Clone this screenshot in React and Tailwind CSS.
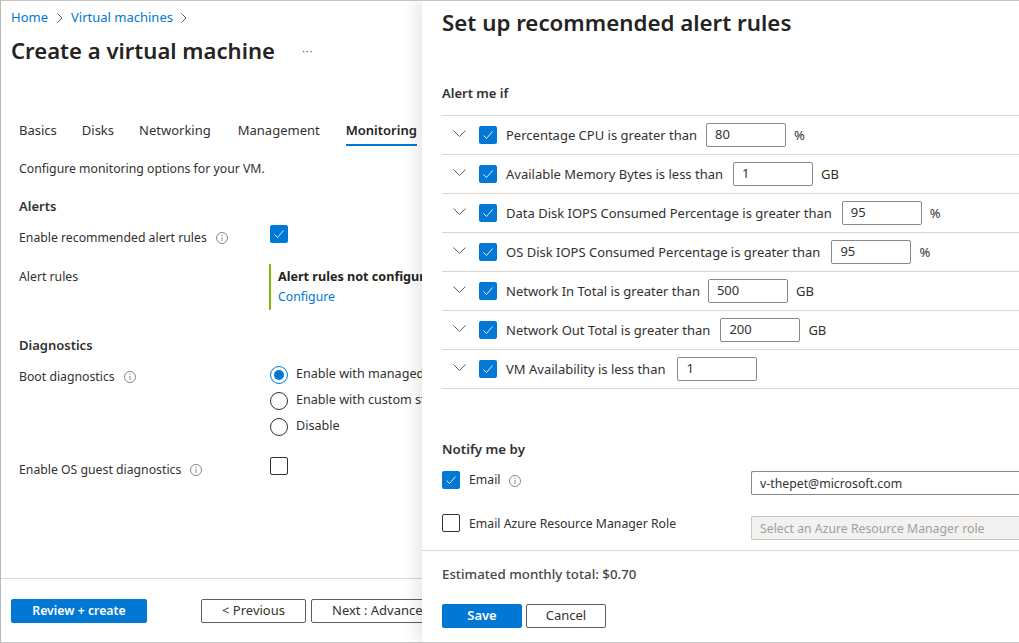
function Check({ on, className = "" }) {
  return (
    <span className={`flex h-[18px] w-[18px] shrink-0 items-center justify-center rounded-[2px] ${on ? "bg-[#0078d4]" : "border border-[#323130] bg-white"} ${className}`}>
      {on && (
        <svg width="12" height="12" viewBox="0 0 12 12" fill="none">
          <path d="M1.5 6.5 L4.5 9.5 L10.5 2.5" stroke="white" strokeWidth="0.9" />
        </svg>
      )}
    </span>
  );
}

function Info({ className = "" }) {
  return (
    <svg width="12" height="12" viewBox="0 0 12 12" fill="none" className={`shrink-0 ${className}`}>
      <circle cx="6" cy="6" r="5.5" stroke="#8a8886" />
      <path d="M6 5v4" stroke="#8a8886" />
      <circle cx="6" cy="3.3" r="0.7" fill="#8a8886" />
    </svg>
  );
}

function Chevron() {
  return (
    <svg width="13" height="7" viewBox="0 0 13 7" fill="none" className="shrink-0 -translate-y-[1px]">
      <path d="M0.5 0.5 L6.5 6.5 L12.5 0.5" stroke="#605e5c" />
    </svg>
  );
}

function Crumb() {
  return (
    <svg width="6" height="10" viewBox="0 0 6 10" fill="none" className="shrink-0">
      <path d="M0.5 0.5 L5 5 L0.5 9.5" stroke="#605e5c" />
    </svg>
  );
}

function Radio({ on, label }) {
  return (
    <div className="flex h-[18px] items-center gap-2">
      <span className={`flex h-[18px] w-[18px] shrink-0 items-center justify-center rounded-full border ${on ? "border-[#0078d4]" : "border-[#323130]"}`}>
        {on && <span className="h-[10px] w-[10px] rounded-full bg-[#0078d4]" />}
      </span>
      <span className="whitespace-nowrap text-[12.6px]">{label}</span>
    </div>
  );
}

const rules = [
  ["Percentage CPU is greater than", "80", "%", "ml-[9px]"],
  ["Available Memory Bytes is less than", "1", "GB", "ml-[10px]"],
  ["Data Disk IOPS Consumed Percentage is greater than", "95", "%", "ml-[10px]"],
  ["OS Disk IOPS Consumed Percentage is greater than", "95", "%", "ml-[11px]"],
  ["Network In Total is greater than", "500", "GB", "ml-[8px]"],
  ["Network Out Total is greater than", "200", "GB", "ml-[10px]"],
  ["VM Availability is less than", "1", "", "ml-[12px]"],
];

function Rule({ label, value, unit, gap }) {
  return (
    <div className="flex h-[39px] items-center border-t border-[#d6d6d6] pl-[11px]">
      <Chevron />
      <Check on className="ml-[13px]" />
      <span className="ml-[9px] whitespace-nowrap pt-[2px]">{label}</span>
      <span className={`flex h-[24px] w-[80px] shrink-0 items-center rounded-[2px] border border-[#8a8886] px-2 pt-[1px] ${gap}`}>{value}</span>
      {unit && <span className="ml-2 pt-[2px]">{unit}</span>}
    </div>
  );
}

export default function App() {
  return (
    <div className="flex h-[643px] w-[1019px] overflow-hidden border-y border-l border-y-[#c4c4c4] border-l-[#b8b8b8] bg-white font-['Noto_Sans','Open_Sans',sans-serif] text-[13px] text-[#323130]">
      <div className="flex w-[421px] shrink-0 flex-col overflow-hidden">
        <div className="min-h-0 flex-1 pl-[10px]">
          <div className="mt-[8px] flex h-[17px] items-center gap-[8.5px] text-[#0078d4]">
            <span>Home</span><Crumb /><span>Virtual machines</span><Crumb />
          </div>
          <div className="mt-[7px] flex items-center">
            <h1 className="whitespace-nowrap text-[22.1px] font-semibold leading-[34px] text-[#252423]">Create a virtual machine</h1>
            <span className="ml-[27px] text-[11px] leading-none tracking-[1px] text-[#605e5c]">···</span>
          </div>
          <div className="ml-[8px] mt-[54px] flex h-[37px] items-start whitespace-nowrap">
            <span className="mr-[25px]">Basics</span>
            <span className="mr-[25px]">Disks</span>
            <span className="mr-[27px]">Networking</span>
            <span className="mr-[26px]">Management</span>
            <span className="border-b-2 border-[#0078d4] pb-[3px] font-semibold text-[#252423]">Monitoring</span>
          </div>
          <div className="ml-[8px] text-[12.25px]">
            <p className="mt-[2px]">Configure monitoring options for your VM.</p>
            <h2 className="mt-[19px] text-[13px] font-semibold">Alerts</h2>
            <div className="mt-[8px] flex">
              <div className="flex w-[251px] shrink-0 items-center gap-[9px] pt-[4px]">Enable recommended alert rules <Info /></div>
              <Check on />
            </div>
            <div className="mt-[17px] flex">
              <div className="w-[250px] shrink-0 pt-[4px]">Alert rules</div>
              <div className="h-[46px] overflow-hidden whitespace-nowrap border-l-2 border-[#7fba00] pl-[7px] pt-[4px]">
                <div className="text-[12.6px] font-bold text-[#252423]">Alert rules not configured</div>
                <div className="mt-[1px] text-[#0078d4]">Configure</div>
              </div>
            </div>
            <h2 className="mt-[26px] text-[13px] font-semibold">Diagnostics</h2>
            <div className="mt-[10px] flex">
              <div className="flex w-[251px] shrink-0 items-start gap-[9px] pt-[2px]">Boot diagnostics <Info className="mt-[3px]" /></div>
              <div className="flex flex-col gap-2">
                <Radio on label="Enable with managed storage account" />
                <Radio label="Enable with custom storage account" />
                <Radio label="Disable" />
              </div>
            </div>
            <div className="mt-[21px] flex">
              <div className="flex w-[251px] shrink-0 items-center gap-[9px] pt-[4px]">Enable OS guest diagnostics <Info /></div>
              <Check />
            </div>
          </div>
        </div>
        <div className="flex h-[64px] shrink-0 items-start gap-[54px] border-t border-[#d6d6d6] pl-[10px] pt-[20px]">
          <button className="h-[24px] w-[136px] shrink-0 rounded-[2px] bg-[#0078d4] text-[12.3px] font-semibold text-white">Review + create</button>
          <div className="flex shrink-0 gap-[5px]">
            <button className="h-[24px] w-[105px] shrink-0 rounded-[2px] border border-[#605e5c]">&lt; Previous</button>
            <button className="h-[24px] w-[130px] shrink-0 whitespace-nowrap rounded-[2px] border border-[#605e5c] pl-[20px] text-left">Next : Advanced &gt;</button>
          </div>
        </div>
      </div>
      <div className="relative flex min-w-0 flex-1 flex-col overflow-hidden shadow-[-8px_0_12px_rgba(0,0,0,0.08)]">
        <div className="min-h-0 flex-1 pl-[20px]">
          <h1 className="mt-[6px] whitespace-nowrap text-[22.3px] font-semibold leading-[32px] text-[#252423]">Set up recommended alert rules</h1>
          <h2 className="mt-[45px] font-semibold">Alert me if</h2>
          <div className="mt-[11px] border-b border-[#d6d6d6]">
            {rules.map((r) => <Rule key={r[0]} label={r[0]} value={r[1]} unit={r[2]} gap={r[3]} />)}
          </div>
          <h2 className="mt-[51px] text-[13.3px] font-semibold">Notify me by</h2>
          <div className="mt-[12px] flex items-start">
            <Check on />
            <div className="ml-[9px] flex w-[282px] shrink-0 items-center gap-[9px] text-[12.25px]">Email <Info /></div>
            <div className="flex h-[24px] min-w-0 flex-1 items-center rounded-l-[2px] border-y border-l border-[#8a8886] px-2 pt-[2px] text-[12.3px]">v-thepet@microsoft.com</div>
          </div>
          <div className="mt-[19px] flex items-start">
            <Check />
            <div className="ml-[9px] w-[282px] shrink-0 whitespace-nowrap pt-[1px] text-[12.25px]">Email Azure Resource Manager Role</div>
            <div className="mt-[2px] flex h-[24px] min-w-0 flex-1 items-center overflow-hidden whitespace-nowrap rounded-l-[2px] border-y border-l border-[#c8c6c4] bg-[#f3f2f1] px-2 pt-[1px] text-[12.25px] text-[#a19f9d]">Select an Azure Resource Manager role</div>
          </div>
        </div>
        <div className="h-[92px] shrink-0 border-t border-[#d6d6d6] pl-[20px]">
          <p className="mt-[14px] text-[13.3px] font-medium text-[#484644]">Estimated monthly total: $0.70</p>
          <div className="mt-[19px] flex gap-1">
            <button className="h-[24px] w-[80px] rounded-[2px] bg-[#0078d4] font-semibold text-white">Save</button>
            <button className="h-[24px] w-[80px] rounded-[2px] border border-[#605e5c]">Cancel</button>
          </div>
        </div>
      </div>
    </div>
  );
}
